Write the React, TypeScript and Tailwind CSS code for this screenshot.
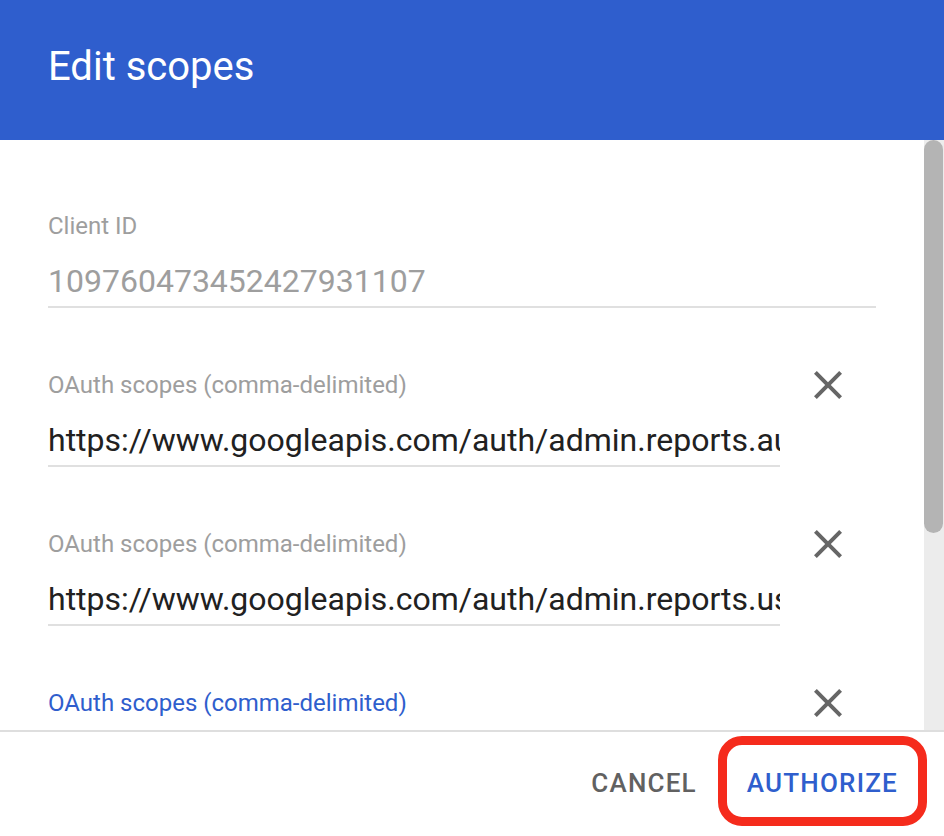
import React from 'react';

const CloseIcon = () => (
  <svg width="48" height="48" viewBox="0 0 24 24" className="shrink-0">
    <path
      d="M19 6.41 17.59 5 12 10.59 6.41 5 5 6.41 10.59 12 5 17.59 6.41 19 12 13.41 17.59 19 19 17.59 13.41 12z"
      fill="#666666"
    />
  </svg>
);

type ScopeProps = { value: string; focused?: boolean };

function ScopeField({ value, focused }: ScopeProps) {
  return (
    <div className="flex">
      <div className="w-[732px] shrink-0">
        <div className={`h-[28px] text-[24px] leading-[28px] ${focused ? 'text-[#2f5ecd]' : 'text-[#9e9e9e]'}`}>
          OAuth scopes (comma-delimited)
        </div>
        <div className="mt-[21px] pb-[5px] border-b-2 border-[#e0e0e0]">
          <div className="h-[40px] text-[32px] leading-[40px] text-[#212121] whitespace-nowrap overflow-hidden">
            {value}
          </div>
        </div>
      </div>
      <div className="w-[96px] shrink-0">
        <div className="h-[28px] flex items-center justify-center">
          <CloseIcon />
        </div>
      </div>
    </div>
  );
}

export default function App() {
  return (
    <div className="w-[944px] h-[836px] flex flex-col bg-white overflow-hidden" style={{ fontFamily: 'Roboto, "Noto Sans", sans-serif' }}>
      <header className="h-[140px] shrink-0 bg-[#2f5ecd] pl-[48px] pt-[43px]">
        <h1 className="text-[40px] leading-[48px] text-white font-normal">Edit scopes</h1>
      </header>

      <div className="flex-1 flex min-h-0">
        <main className="flex-1 overflow-hidden pl-[48px] pr-[48px] pt-[72px] flex flex-col gap-[63px]">
          {/* Client ID */}
          <div>
            <div className="h-[28px] text-[24px] leading-[28px] text-[#9e9e9e]">Client ID</div>
            <div className="mt-[21px] pb-[5px] border-b-2 border-[#e0e0e0]">
              <div className="h-[40px] text-[32px] leading-[40px] text-[#9e9e9e]">109760473452427931107</div>
            </div>
          </div>

          <ScopeField value="https://www.googleapis.com/auth/admin.reports.audit.readonly" />
          <ScopeField value="https://www.googleapis.com/auth/admin.reports.usage.readonly" />
          <ScopeField value="" focused />
        </main>

        {/* scrollbar */}
        <div className="w-[20px] shrink-0 bg-[#ececec]">
          <div className="w-[19px] h-[393px] rounded-full bg-[#b4b4b4]" />
        </div>
      </div>

      <footer className="shrink-0 border-t-2 border-[#dedede] flex justify-end items-center pt-[4px] pb-[10px] pr-[17px]">
        <button className="mr-[21px] pt-[4px] text-[26px] leading-[30px] font-medium tracking-[1.2px] text-[#616161]">
          CANCEL
        </button>
        <button className="h-[90px] px-[20px] pt-[4px] border-[9px] border-[#f52b1c] rounded-[24px] text-[26px] leading-[30px] font-medium tracking-[1.2px] text-[#2f5ecd]">
          AUTHORIZE
        </button>
      </footer>
    </div>
  );
}
